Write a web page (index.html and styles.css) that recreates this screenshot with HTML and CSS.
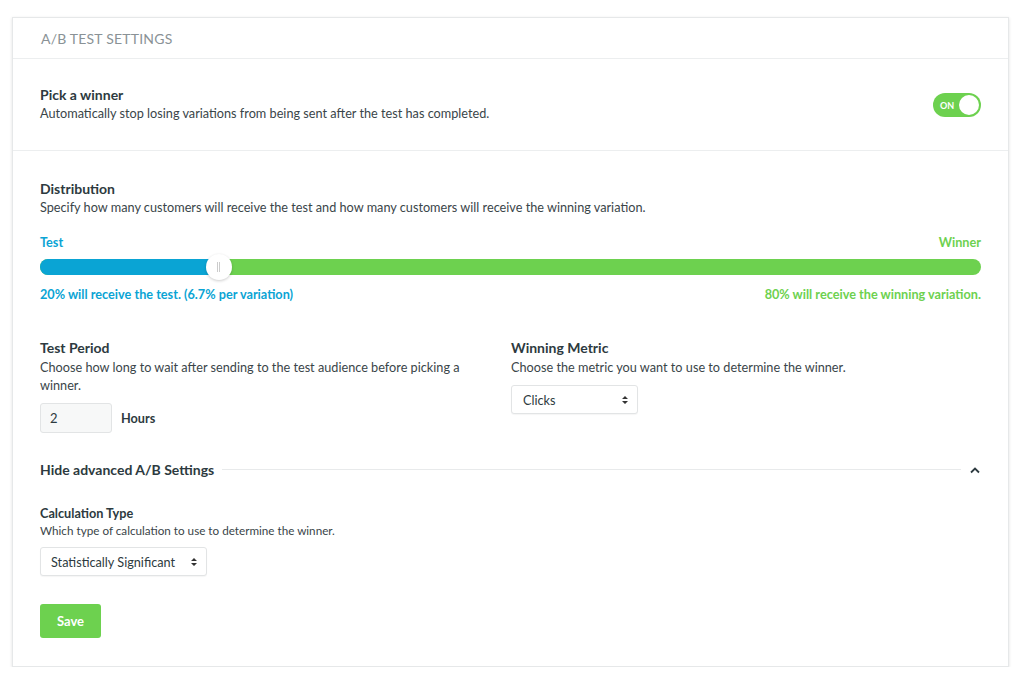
FILE: index.html
```html
<!DOCTYPE html>
<html>
<head>
<meta charset="utf-8">
<link rel="stylesheet" href="styles.css">
</head>
<body>
<div class="card">
  <div class="card-header">A/B TEST SETTINGS</div>
  <div class="section pick">
    <div class="pick-text">
      <div class="title">Pick a winner</div>
      <div class="desc">Automatically stop losing variations from being sent after the test has completed.</div>
    </div>
    <div class="toggle"><span class="toggle-label">ON</span><span class="knob"></span></div>
  </div>
  <div class="section dist">
    <div class="title">Distribution</div>
    <div class="desc">Specify how many customers will receive the test and how many customers will receive the winning variation.</div>
    <div class="slider-labels"><span class="blue">Test</span><span class="green">Winner</span></div>
    <div class="slider">
      <div class="slider-fill" style="width:19%"></div>
      <div class="thumb" style="left:19%"><span class="grip"></span></div>
    </div>
    <div class="slider-labels info"><span class="blue">20% will receive the test. (6.7% per variation)</span><span class="green">80% will receive the winning variation.</span></div>

    <div class="cols">
      <div class="col">
        <div class="title">Test Period</div>
        <div class="desc">Choose how long to wait after sending to the test audience before picking a winner.</div>
        <div class="period">
          <div class="input">2</div>
          <span class="unit">Hours</span>
        </div>
      </div>
      <div class="col">
        <div class="title">Winning Metric</div>
        <div class="desc">Choose the metric you want to use to determine the winner.</div>
        <div class="select metric"><span>Clicks</span>
          <svg class="updown" width="8" height="12" viewBox="0 0 8 12"><path d="M1 5 L4 2 L7 5 Z M1 7 L4 10 L7 7 Z" fill="#333"/></svg>
        </div>
      </div>
    </div>

    <div class="advanced">
      <span class="adv-title">Hide advanced A/B Settings</span>
      <span class="adv-line"></span>
      <svg class="chev" width="12" height="8" viewBox="0 0 12 8"><path d="M2 6.5 L6 2.5 L10 6.5" fill="none" stroke="#2d3a40" stroke-width="1.8"/></svg>
    </div>

    <div class="calc">
      <div class="title small">Calculation Type</div>
      <div class="desc small">Which type of calculation to use to determine the winner.</div>
      <div class="select calc-select"><span>Statistically Significant</span>
        <svg class="updown" width="8" height="12" viewBox="0 0 8 12"><path d="M1 5 L4 2 L7 5 Z M1 7 L4 10 L7 7 Z" fill="#333"/></svg>
      </div>
    </div>

    <button class="save">Save</button>
  </div>
</div>
</body>
</html>
```
FILE: styles.css
```css
* { box-sizing: border-box; }
body {
  margin: 0;
  background: #fff;
  font-family: Lato, "Open Sans", Arial, sans-serif;
  color: #2d3a40;
}
.card {
  margin: 17px 15px 0 12px;
  border: 1px solid #e6e8e9;
  box-shadow: 0 1px 3px rgba(0,0,0,0.12);
  background: #fff;
}
.card-header {
  height: 41px;
  padding: 0 28px;
  display: flex;
  align-items: center;
  font-size: 14px;
  letter-spacing: 0.2px;
  color: #8a9296;
  border-bottom: 1px solid #eceeef;
}
.section { padding: 0 27px; }
.pick {
  height: 92px;
  display: flex;
  align-items: center;
  justify-content: space-between;
  border-bottom: 1px solid #eceeef;
}
.title {
  font-size: 14px;
  font-weight: 700;
  color: #2d3a40;
  line-height: 18px;
}
.desc {
  font-size: 12.7px;
  color: #3a4549;
  line-height: 18px;
}
.pick .desc { line-height: 19px; }
.toggle {
  width: 48px;
  height: 24px;
  border-radius: 12px;
  background: #6dd14f;
  display: flex;
  align-items: center;
  justify-content: space-between;
  padding: 0 2px 0 7px;
  margin-top: 1px;
}
.toggle-label { color: #fff; font-size: 9px; font-weight: 700; }
.knob { width: 20px; height: 20px; border-radius: 50%; background: #fff; }
.dist { padding-top: 29px; padding-bottom: 28px; }
.slider-labels {
  display: flex;
  justify-content: space-between;
  font-size: 12.7px;
  font-weight: 700;
  margin-top: 18px;
}
.slider-labels.info { margin-top: 11px; }
.blue { color: #0aa4d4; }
.green { color: #6dd14f; }
.slider {
  position: relative;
  height: 16px;
  margin-top: 9px;
  background: #6dd14f;
  border-radius: 8px;
}
.slider-fill {
  height: 100%;
  background: #0aa4d4;
  border-radius: 8px 0 0 8px;
}
.thumb {
  position: absolute;
  top: -5px;
  width: 26px;
  height: 26px;
  margin-left: -13px;
  border-radius: 50%;
  background: #fff;
  box-shadow: 0 1px 3px rgba(0,0,0,0.2);
  display: flex;
  align-items: center;
  justify-content: center;
}
.grip { width: 3px; height: 10px; border-left: 1px solid #ccc; border-right: 1px solid #ccc; }
.cols {
  display: grid;
  grid-template-columns: 441px 1fr;
  gap: 30px;
  margin-top: 37px;
}
.col .desc { margin-top: 1px; }
.period { display: flex; align-items: center; gap: 9px; margin-top: 9px; }
.input {
  width: 72px;
  height: 30px;
  border: 1px solid #e2e4e5;
  border-radius: 3px;
  background: #f7f8f8;
  font-size: 13px;
  padding: 0 9px;
  display: flex;
  align-items: center;
}
.unit { font-size: 12.7px; font-weight: 700; }
.select {
  height: 29px;
  border: 1px solid #e2e4e5;
  border-radius: 3px;
  background: #fff;
  font-size: 12.7px;
  display: flex;
  align-items: center;
  justify-content: space-between;
  padding: 0 8px 0 11px;
  box-shadow: 0 1px 1px rgba(0,0,0,0.04);
}
.metric { width: 127px; margin-top: 9px; }
.advanced {
  display: flex;
  align-items: center;
  gap: 8px;
  margin-top: 28px;
}
.adv-title { font-size: 14px; font-weight: 700; }
.adv-line { flex: 1; height: 1px; background: #e8eaeb; }
.chev { margin-left: 0; }
.calc { margin-top: 26px; }
.title.small { font-size: 12.7px; }
.desc.small { font-size: 11.7px; line-height: 17px; }
.calc-select { width: 167px; margin-top: 8px; padding-left: 10px; }
.save {
  display: block;
  margin-top: 28px;
  width: 61px;
  height: 34px;
  border: none;
  border-radius: 3px;
  background: #6dd14f;
  color: #fff;
  font-family: inherit;
  font-size: 13px;
  font-weight: 700;
}
```
